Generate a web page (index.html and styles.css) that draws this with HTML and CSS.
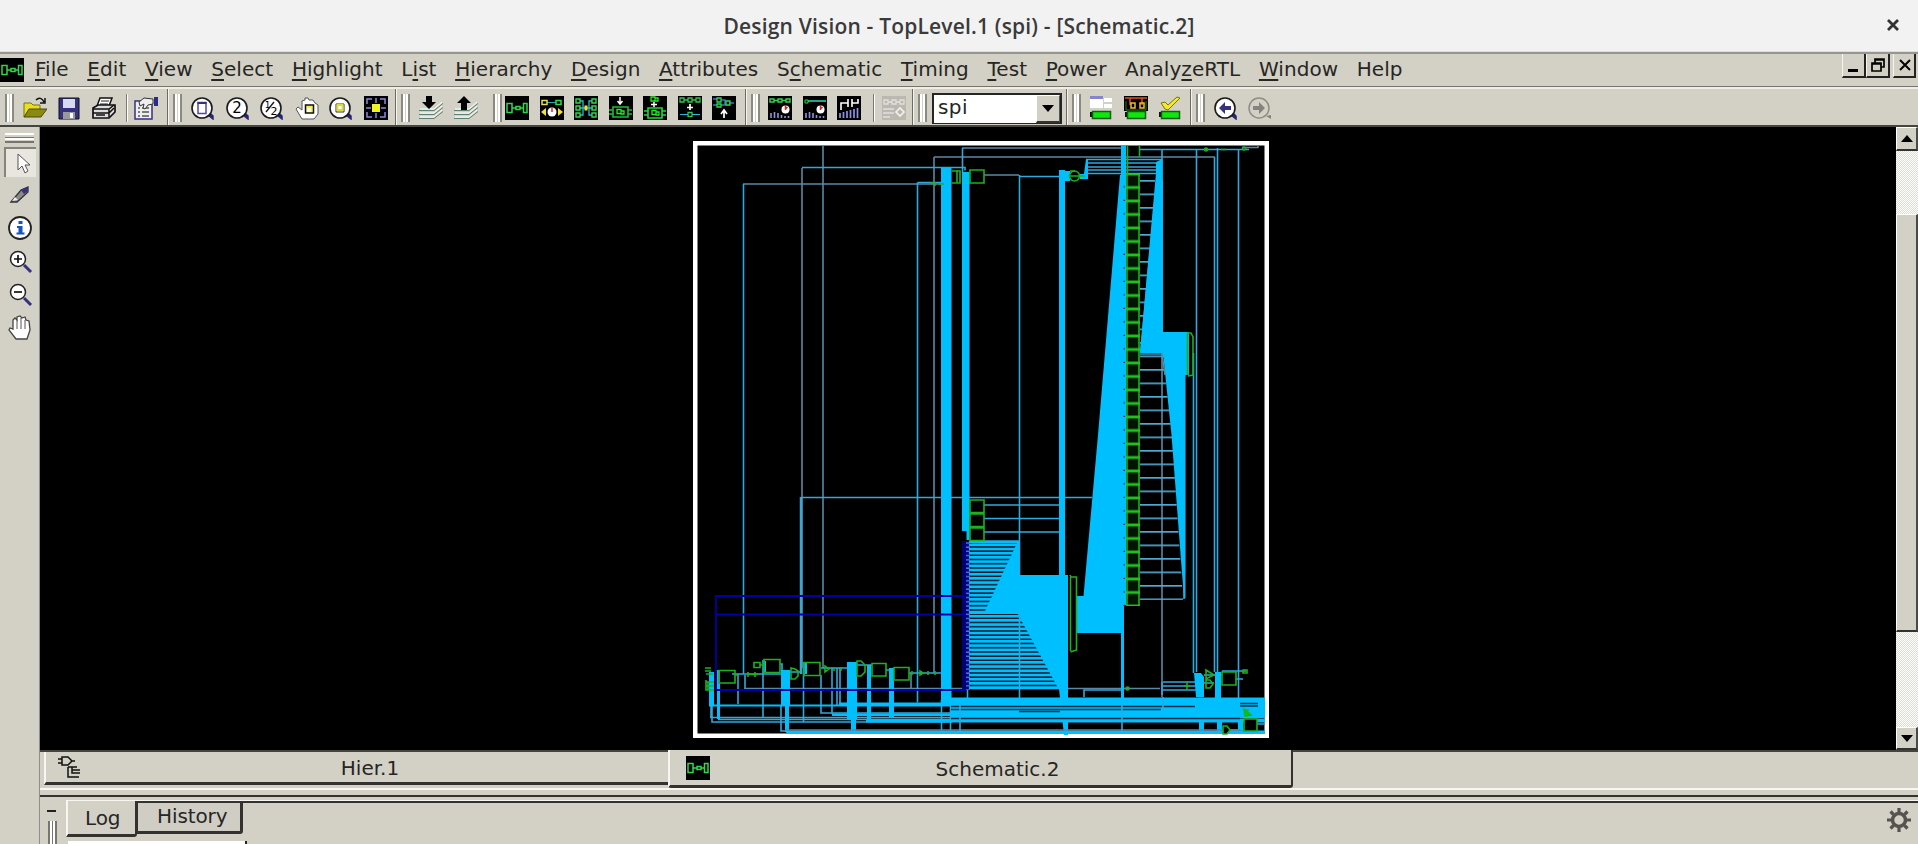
FILE: index.html
```html
<!DOCTYPE html>
<html lang="en">
<head>
<meta charset="utf-8">
<title>Design Vision - TopLevel.1 (spi) - [Schematic.2]</title>
<link rel="stylesheet" href="styles.css">
</head>
<body>
<svg width="0" height="0" class="defs">
  <defs>
    <symbol id="logo" viewBox="0 0 24 24"><path fill="#000" d="M0 0h24v24H0z"/><path fill="none" stroke="#2fd84a" stroke-width="1.5" d="M2 7.500h5v9H2zM18.500 7.500H22v9h-3.500zM11 10.500h4v3h-4zM7 12h4M15 12h3.500"/></symbol>
    <symbol id="lens" viewBox="0 0 24 24"><path d="M17 19l5 4v-3l-2-2z" fill="#2a2478" stroke="#2a2478" stroke-width="1.500"/><circle cx="11" cy="12" r="10" fill="#fff" stroke="#1b1b1b" stroke-width="1.600"/></symbol>
    <symbol id="sheets" viewBox="0 0 24 24"><path fill="none" stroke="#fff" d="M1 13h14l8-7M1 17h14l8-7M1 21h14l8-7"/><path fill="none" stroke="#5d8173" d="M0 14.500h15l9-7M0 18.500h15l9-7M0 22.500h15l9-7"/></symbol>
    <symbol id="bars" viewBox="0 0 24 24"><path fill="none" stroke="#8f8fe8" stroke-width="1.600" d="M3 22v-5M6.500 22v-6M10 22v-5M13.500 22v-3M17 22v-2M20.500 22v-2"/><circle cx="17.500" cy="13.500" r="4" fill="#fff"/><path d="M17.500 14V9M17.500 13l2-2" stroke="#d22" stroke-width="1.500"/></symbol>
    <symbol id="battery" viewBox="0 0 24 24"><path fill="#111" d="M1 16h3v5H1z"/><path fill="#0ce80c" stroke="#135c10" stroke-width="1.500" d="M3.500 15.500h18v7h-18z"/></symbol>
  </defs>
</svg>

<div class="window">
  <header class="titlebar">
    <span class="title">Design Vision - TopLevel.1 (spi) - [Schematic.2]</span>
    <svg class="close" width="14" height="14" viewBox="0 0 14 14"><path d="M2 2l10 10M12 2L2 12" stroke="#333" stroke-width="2.800"/></svg>
  </header>

  <nav class="menubar">
    <svg class="app" width="24" height="24"><use href="#logo"/></svg>
    <span class="m"><u>F</u>ile</span><span class="m"><u>E</u>dit</span><span class="m"><u>V</u>iew</span><span class="m"><u>S</u>elect</span><span class="m"><u>H</u>ighlight</span><span class="m">L<u>i</u>st</span><span class="m"><u>H</u>ierarchy</span><span class="m"><u>D</u>esign</span><span class="m"><u>A</u>ttributes</span><span class="m">S<u>c</u>hematic</span><span class="m"><u>T</u>iming</span><span class="m"><u>T</u>est</span><span class="m"><u>P</u>ower</span><span class="m">Analy<u>z</u>eRTL</span><span class="m"><u>W</u>indow</span><span class="m">Help</span>
    <div class="winbtns">
      <span class="wb"><svg width="20" height="20"><path d="M4 15.500h10" stroke="#000" stroke-width="3"/></svg></span>
      <span class="wb"><svg width="20" height="20"><path d="M7 8V4h9v8h-3M7 4.800h9M4 8h9v8H4zM4 9h9" fill="none" stroke="#000" stroke-width="1.700"/></svg></span>
      <span class="wb last"><svg width="20" height="20"><path d="M5 5l10 10M15 5L5 15" stroke="#000" stroke-width="2"/></svg></span>
    </div>
  </nav>

  <div class="toolbars">
    <div class="tb tb-file">
      <i class="grip"></i>
      <svg class="ic" viewBox="0 0 24 24"><path d="M1 21V7h7l2 2h7v4" fill="#e8df22" stroke="#77740a"/><path d="M1 21l5-8h18l-6 8z" fill="#8a8a10" stroke="#4a4a08"/><path d="M13 4c3-3 6-2 8 2M22 2v5h-5" fill="none" stroke="#111" stroke-width="1.500"/></svg>
      <svg class="ic" viewBox="0 0 24 24"><path d="M2 2h20v21H2z" fill="#37327f" stroke="#111"/><path d="M6 3h12v9H6z" fill="#d8daf0"/><path d="M6 16h12v7H6z" fill="#999"/><path d="M13 17h3v5h-3z" fill="#fff"/></svg>
      <svg class="ic" viewBox="0 0 24 24"><path d="M8 2h12l-3 8H5z" fill="#fff" stroke="#111" stroke-width="1.500"/><path d="M9 5h8M8 8h8" stroke="#222"/><path d="M1 12l5-3h17v7l-6 6H1z" fill="#ddd" stroke="#111" stroke-width="1.700"/><path d="M1 13h16l5-4M1 17h16l5-5M17 13v8M4 19h9" fill="none" stroke="#111" stroke-width="1.500"/></svg>
      <i class="sep"></i>
      <svg class="ic" viewBox="0 0 24 24"><path d="M1 5h17v18H1z" fill="#eee" stroke="#37327f" stroke-width="1.500"/><path d="M4 12h2M8 12h7M4 16h2M8 16h7M4 20h2M8 20h7" stroke="#555" stroke-width="1.500"/><path d="M5 6l5-4 9 1v5l-5 1-3 4-2-1 1-4-4 2z" fill="#eee" stroke="#333"/><path d="M20 1h4v9h-4z" fill="#2f2988"/></svg>
    </div>
    <div class="tb tb-view">
      <i class="grip"></i>
      <svg class="ic" viewBox="0 0 24 24"><use href="#lens"/><path d="M7 6.500h8v11H7z" fill="#fff" stroke="#4f48a8" stroke-width="1.500"/><path d="M6.500 6h9v2h-9z" fill="#37327f"/></svg>
      <svg class="ic" viewBox="0 0 24 24"><use href="#lens"/><text x="11" y="17" class="lens-t">2</text></svg>
      <svg class="ic" viewBox="0 0 24 24"><use href="#lens"/><text x="7.500" y="12" class="lens-s">1</text><path d="M6 16L14 6" stroke="#111" stroke-width="1.300"/><text x="14" y="18.500" class="lens-s big">2</text></svg>
      <svg class="ic" viewBox="0 0 24 24"><path d="M7 23L1 13l2-2 4 3V5l3-1V2h3l1 2h4l2 3 3 2v9l-4 5z" fill="#fff" stroke="#555"/><path d="M10.500 9h8v8h-8z" fill="#f4f445" stroke="#111" stroke-width="1.500"/><path d="M12 12h4v4h-4z" fill="#fff"/></svg>
      <svg class="ic" viewBox="0 0 24 24"><use href="#lens"/><path d="M7 8h8v8H7z" fill="#fff" stroke="#333"/><path d="M8.500 9h5v5h-5z" fill="none" stroke="#dede2a" stroke-width="1.800"/></svg>
      <svg class="ic" viewBox="0 0 24 24"><path d="M0 0h24v24H0z"/><path d="M3 8V3h5M16 3h5v5M21 16v5h-5M8 21H3v-5M12 2v5M12 17v5M2 12h5M17 12h5" fill="none" stroke="#8c86e0" stroke-width="1.500"/><path d="M8 8h8v8H8z" fill="#f4f422"/></svg>
    </div>
    <div class="tb tb-hier">
      <i class="grip"></i>
      <svg class="ic" viewBox="0 0 24 24"><use href="#sheets"/><path d="M7 0h6v6h4l-7 7-7-7h4z"/></svg>
      <svg class="ic" viewBox="0 0 24 24"><use href="#sheets"/><path d="M7 14h6V7h4l-7-7-7 7h4z"/></svg>
    </div>
    <div class="tb tb-schem">
      <i class="grip"></i>
      <svg class="ic" viewBox="0 0 24 24"><use href="#logo"/></svg>
      <svg class="ic" viewBox="0 0 24 24"><path d="M0 0h24v24H0z"/><path d="M7 6.500h9" stroke="#2ab"/><path d="M2 4.500h5v4H2z" fill="none" stroke="#e6dc5a" stroke-width="1.500"/><path d="M16 4.500h5v4h-5z" fill="none" stroke="#2fd84a" stroke-width="1.500"/><circle cx="12" cy="16" r="4.500" fill="#fff"/><path d="M12 16v-4" stroke="#d22" stroke-width="1.500"/><path d="M6 12v8l-5-4zM18 12v8l5-4z" fill="#f3e32a"/></svg>
      <svg class="ic" viewBox="0 0 24 24"><path d="M0 0h24v24H0z"/><path d="M6 5h3v14H6M18 5h-3v14h3M5 12h14" fill="none" stroke="#2bb8d8" stroke-width="1.300"/><path d="M2 3h4v4H2zM2 10h4v4H2zM2 17h4v4H2zM18 3h4v4h-4zM18 10h4v4h-4zM18 17h4v4h-4z" fill="none" stroke="#2fd84a" stroke-width="1.400"/><path d="M10.500 9.500h3v5h-3z" fill="#f3e32a"/></svg>
      <svg class="ic" viewBox="0 0 24 24"><path d="M0 0h24v24H0z"/><path d="M11 1v6M8.500 5l2.500 3 2.500-3" stroke="#fff" stroke-width="1.500" fill="none"/><path d="M4 11h15v10H4zM0 14h4M0 18h4M19 14h4M19 18h4" fill="none" stroke="#25b83a" stroke-width="1.600"/><path d="M8 13.500h4v4H8zM12 15h3v3h-3z" fill="none" stroke="#20ee20" stroke-width="1.300"/></svg>
      <svg class="ic" viewBox="0 0 24 24"><path d="M0 0h24v24H0z"/><path d="M8 1h4v4H8zM12 2h3v3h-3z" fill="none" stroke="#20ee20" stroke-width="1.300"/><path d="M11 6v5M8 8.500h6" stroke="#fff" stroke-width="1.500"/><path d="M5 12h14v10H5zM1 15h4M1 19h4M19 15h4M19 19h4" fill="none" stroke="#25d83a" stroke-width="1.600"/><path d="M9 14.500h4v4H9zM13 16h3v3h-3z" fill="none" stroke="#20ee20" stroke-width="1.300"/></svg>
      <svg class="ic" viewBox="0 0 24 24"><path d="M0 0h24v24H0z"/><path d="M2 2h4v4H2zM10 2h4v4h-4zM18 2h4v4h-4zM6 4h4M14 4h4M10 16.500h4v4h-4z" fill="none" stroke="#2fc84a" stroke-width="1.300"/><path d="M2 18.500h8M14 18.500h8" stroke="#2bb8d8"/><path d="M12 8v6M9 11.500h6" stroke="#fff" stroke-width="1.700"/></svg>
      <svg class="ic" viewBox="0 0 24 24"><path d="M0 0h24v24H0z"/><path d="M1 3h4M1 9h4M9 4h4v5H9M17 7h5" fill="none" stroke="#3d6fe0" stroke-width="1.500"/><path d="M5 2h4v4H5zM5 8h4v3H5zM14 5h4v4h-4z" fill="none" stroke="#2fd84a" stroke-width="1.300"/><path d="M12 22v-7M9 18l3-4 3 4" fill="none" stroke="#fff" stroke-width="1.700"/></svg>
    </div>
    <div class="tb tb-time">
      <i class="grip"></i>
      <svg class="ic" viewBox="0 0 24 24"><path d="M0 0h24v24H0z"/><path d="M2 3h4v3H2zM10 3h4v3h-4zM18 3h4v3h-4zM6 4.500h4M14 4.500h4" fill="none" stroke="#2fd84a" stroke-width="1.400"/><use href="#bars"/></svg>
      <svg class="ic" viewBox="0 0 24 24"><path d="M0 0h24v24H0z"/><path d="M2 4h3v3H2z" fill="none" stroke="#2fd84a"/><path d="M5 5h18" stroke="#2fd8b4" stroke-width="1.500"/><use href="#bars"/></svg>
      <svg class="ic" viewBox="0 0 24 24"><path d="M0 0h24v24H0z"/><path d="M4 14V7h7M11 3v8M15 3v8M15 7h6V3" fill="none" stroke="#fff" stroke-width="1.600"/><path d="M3 22v-5M6.500 22v-6M10 22v-7M13.500 22v-8M17 22v-9M20.500 22V12" stroke="#8f8fe8" stroke-width="1.700"/></svg>
      <i class="sep"></i>
      <svg class="ic" viewBox="0 0 24 24"><path d="M0 0h24v24H0z" fill="#bab8b1"/><path d="M2 4h4v4H2zM10 4h4v4h-4zM18 4h4v4h-4zM6 6h4M14 6h4M1 13h11M1 17h11M1 21h7" fill="none" stroke="#e2e0da" stroke-width="1.300"/><path d="M14 16l4-4 4 4-4 4z" fill="none" stroke="#f2f0ea" stroke-width="1.700"/></svg>
    </div>
    <div class="tb tb-combo">
      <i class="grip"></i>
      <div class="combo"><span>spi</span><b><svg width="12" height="7"><path d="M0 0h12L6 7z"/></svg></b></div>
    </div>
    <div class="tb tb-power">
      <i class="grip"></i>
      <svg class="ic" viewBox="0 0 24 24"><path d="M1 0h13v12H1zM15 2h8v4h-8zM15 8h8v4h-8z" fill="#fff"/><path d="M1 0h13v3H1z" fill="#8784cf"/><use href="#battery"/></svg>
      <svg class="ic" viewBox="0 0 24 24"><path d="M0 0h24v15H0z"/><path d="M1 2h22M6 2v7M18 2v7" stroke="#e0531e" stroke-width="1.500"/><path d="M7 7h4v5H7zM16 7h4v5h-4z" fill="none" stroke="#f0c020" stroke-width="1.500"/><path d="M2 5v9h20V5" fill="none" stroke="#1f8020"/><use href="#battery"/></svg>
      <svg class="ic" viewBox="0 0 24 24"><use href="#battery"/><path d="M3 7l4-1 3 3L19 1l3 1L10 14 7 13z" fill="#f4ec20" stroke="#77720a"/></svg>
    </div>
    <div class="tb tb-nav">
      <i class="grip"></i>
      <svg class="ic" viewBox="0 0 24 24"><use href="#lens"/><path d="M5 12l6-6v4h6v4h-6v4z" fill="#37327f"/></svg>
      <svg class="ic" viewBox="0 0 24 24"><circle cx="11" cy="12" r="10" fill="none" stroke="#8f8d86" stroke-width="1.500"/><path d="M17 12l-6-6v4H5v4h6v4zM18 20l5 3v-4z" fill="#85837c"/></svg>
    </div>
  </div>

  <main class="work">
    <aside class="side">
      <i class="hgrip"></i>
      <span class="tool on"><svg width="32" height="30"><path d="M14 7v16l4-4 3 7 3-2-3-6h5z" fill="#fff" stroke="#555"/></svg></span>
      <span class="tool"><svg width="32" height="30"><path d="M7 22L17 10l7-3v5L13 22z" fill="#8a8a8a" stroke="#333" stroke-width="1.300"/><path d="M17 10l7-3v4l-4 3z" fill="#37327f"/><path d="M8 21l3-4 3 3z" fill="#eee"/></svg></span>
      <span class="tool"><svg width="32" height="30"><circle cx="16" cy="15" r="11" fill="#fff" stroke="#222" stroke-width="1.800"/><path d="M14.500 8h4v3h-4zM13 13h5.500v6.500h2v2h-8v-2h2v-4.500h-1.500z" fill="#1555c0"/></svg></span>
      <span class="tool"><svg width="32" height="30"><path d="M20 18l7 7" stroke="#37327f" stroke-width="3"/><circle cx="14" cy="12" r="7.500" fill="#fff" stroke="#222" stroke-width="1.500"/><path d="M10 12h8M14 8v8" stroke="#111" stroke-width="1.700"/></svg></span>
      <span class="tool"><svg width="32" height="30"><path d="M20 18l7 7" stroke="#37327f" stroke-width="3"/><circle cx="14" cy="12" r="7.500" fill="#fff" stroke="#222" stroke-width="1.500"/><path d="M10 12h8" stroke="#111" stroke-width="1.700"/></svg></span>
      <span class="tool"><svg width="32" height="30"><path d="M12 26l-7-9 1-2 3 1V7l2-2 2 2V4l3-1 2 2 3-1 1 3 3 1 1 9-3 9z" fill="#fff" stroke="#444" stroke-width="1.300"/><path d="M13 7v9M17 5v11M21 7v9" stroke="#555"/></svg></span>
    </aside>

    <section class="pane">
      <div class="view">
        <svg class="schematic" viewBox="40 127 1856 623">
          <defs>
            <pattern id="stub" x="0" y="180" width="60" height="13.500" patternUnits="userSpaceOnUse"><path d="M0 .8h60" stroke="#4fa9d0" stroke-width="1.600"/></pattern>
            <pattern id="cell" x="1126" y="174" width="14" height="13.500" patternUnits="userSpaceOnUse"><path d="M0 0h14v13.500H0z" fill="#021402"/><path d="M1 0v13.500M13 0v13.500" stroke="#17b317" stroke-width="1.600"/><path d="M0 .7h14M0 12.800h14" stroke="#22c022" stroke-width="1.500"/></pattern>
            <pattern id="pin" x="1123" y="174" width="3" height="13.500" patternUnits="userSpaceOnUse"><path d="M.5 13h1.500" stroke="#024" stroke-width="1.400"/></pattern>
            <pattern id="stripe" x="0" y="546" width="60" height="4.200" patternUnits="userSpaceOnUse"><path d="M0 1h60" stroke="#021726" stroke-width="1.500"/></pattern>
            <pattern id="tick" x="966" y="542" width="4" height="4.200" patternUnits="userSpaceOnUse"><path d="M0 1h4" stroke="#4b78d8" stroke-width="1.500"/></pattern>
          </defs>
          <rect x="695.250" y="143.250" width="571.500" height="592.500" class="frame"/>

          <g class="gray">
            <path d="M743 184h200M802 168v500M823 145v523M934 157v516M934 157h281M962 148h160M984 175h35M1242 147.500h16v-2M1162 352v345M745 688.500h415M911 673v16"/>
          </g>
          <g class="net">
            <path d="M743.500 184v490M802 167.500h163v3M917.500 182.500v520M917.500 182.500h24M962.500 148v25M1019.500 175v536M1019.500 176.500h40M1139 149.500h110M1162 149v184M1193.500 353v320M1196.500 149v523M1214.500 157v515M1217.500 148v527M1238.500 149v552"/>
            <path d="M1086 159.500h76M1086 163h76M1086 167h75M1086 170h73M1086 173.500h70"/>
            <path d="M801 497.500h291M984 505h76M984 518.500h76M984 532h76M970 541h49M963 518v12h3"/>
            <path d="M738 674v30M745 675v14M732 674h50M763 660v58M803.500 662v60M821 675v38h130M832 668v46M837 668v37M840 668v36M711 684v33M712 705v17h240M710 717.500h554M718 719.500h546M781 705v26h6M821 668h26M790 672h12M780 664h2v10M856 665h16M886 670h8M909 673h32"/>
            <path d="M941.500 700v31M950.500 700v31M967.500 690v29M1084 697v-7h37M1163 682h33M1163 686h33M1163 690h33M1162 695v-13M1222 671h24M1236 679h7M1256 724h8M1230 730h14M1204 675h18M1204 683h10"/>
          </g>
          <path d="M801 497v177" class="net2"/>

          <g class="fill">
            <path d="M941 168h10.500v535H941zM962 172h7.500v368h-3v-9h-4.500zM1059 170h6v405h-6zM1065 171h5v10h-5zM1086 159h2v20h-8v-5h4zM1121 145h5v32h-5z"/>
            <path d="M1120 175h6v430h-2v96h-3v-68h-44v-37h6.500L1098 435z"/>
            <path d="M1162.500 159v173H1189v43h-3.500v223H1184l-2-25-10.500-138-8-77-2-5H1140l16-180v-11z"/>
            <path d="M969 541h50v34h49v160h-4l-5-46h-90z"/>
            <path d="M709 672h5v33h-5zM717 670h3v49h-3zM763 661h3v12h-3zM781 670h9v35h-9zM785 705h4v27h-4zM804 663h3v11h-3zM847 662h10v57h-10zM851 719h5v13h-5zM867 665h4v54h-4zM889 668h5v50h-5zM1194 673h7l3 4v20h-8zM1215 672h6v26h-6zM941 697.500h324v20H951v-12h-10zM709 704.500h241v2H709zM832 713.500h120v2.500H832zM866 719.500h399v3H866zM785 730.500h480v3.500H787zM1064 722h4v12h-4zM1199 722h5v12h-5zM1217 722h5v12h-5zM1238 722h5v8h-5zM839 702.500h102v2H839z"/>
          </g>
          <path d="M951 706.500h244M951 709.500h210M1019 711.500h41M951 718.500h289M1240 703.500h18M1240 706h18" class="gap"/>
          <path d="M785 730h455" class="gray"/>
          <path d="M960 704v27M1122 704v27M1163 697v12" class="net"/>

          <rect x="1139" y="178" width="16" height="174" fill="url(#stub)"/>
          <path d="M1139 353h22l2 5 9 77 11 165h-44z" fill="url(#stub)"/>
          <path d="M1184 574v25" class="net"/>
          <path d="M1139 353v1h23l3 21" class="gray"/>
          <path d="M1156 180L1140 352h23V180z" class="fill"/>
          <path d="M969 543h48l-32 68h-16zM969 614h49l2 4 38 70h-89z" fill="url(#stripe)"/>
          <path d="M1019.500 614v75" class="net"/>
          <rect x="1126" y="174" width="14" height="432" fill="url(#cell)"/>
          <rect x="1123" y="174" width="3" height="432" fill="url(#pin)"/>

          <path d="M962 541h7v149h-7z" fill="#00007c"/>
          <rect x="966" y="542" width="4" height="148" fill="url(#tick)"/>
          <path d="M716 690v-94h247M716 614.500h250M716 690h250" class="navy"/>

          <g class="dev">
            <path d="M970 170h14v13h-14zM952 171h8v12h-8M939 184h5M957 170v13M1139.500 145v12M1127.500 145v30M1070 171h5M1070 176h15"/>
            <circle cx="1074.500" cy="176" r="5"/><circle cx="1206" cy="149.500" r="1.500"/><circle cx="1244" cy="148.500" r="1.500"/><circle cx="1127.500" cy="688.500" r="1.500"/>
            <path d="M1221 149.500h5M930 183h5v3M1187 333h4l2 4v38l-5 1M1187.500 333v42M1070 575l1 2h5.500v73l-6 2M1070.500 577v74"/>
            <path d="M970 500h14v12.500h-14zM970 514h14v12.500h-14zM970 528h14v12.500h-14z"/>
            <path d="M719 670.500h16v12.500h-16zM754 662.500h6v5h-6zM760 665h4M764 659.500h16v13h-16zM791 668v11h4l3-3v-5l-3-2zM804 662.500h16v13h-16zM857 661h4l4 4v7l-4 4h-4zM872 663.500h14v12.500h-14zM894 667.500h15v12.500h-15z"/>
            <path d="M705 668h6M705 671h6M706 674h7M706 680v10h8M708 682v8M706 682h8M706 686h8M735 675h3M748 672v5M755 672v5M748 674.500h10M825 666v6l4-3zM834 667v4M841 667v4M912 671v4M920 671v4l3-2zM928 671v4M935 671v4"/>
            <path d="M1206 670v9l8-4zM1206 680v8h4l3-4-3-4zM1243 670h4v3h-4zM1187 681v9M1184 686h6"/>
            <path d="M1222 672h14v13h-14zM1244 719h13v12h-13zM1223 726v8h4l3-4-3-4z" fill="#000"/>
            <path d="M1244 709l7 6-6 1zM1245 710h4" fill="#0c0"/>
          </g>
        </svg>
        <div class="scroll">
          <span class="sb"><svg width="12" height="7"><path d="M0 7h12L6 0z"/></svg></span>
          <span class="thumb"></span>
          <span class="sb end"><svg width="12" height="7"><path d="M0 0h12L6 7z"/></svg></span>
        </div>
      </div>

      <div class="doctabs">
        <div class="dtab hier">
          <svg width="26" height="26" viewBox="0 0 26 26"><path d="M5 3h6l4 4-4 4H5zM1 5h4M1 9h4M15 7h3M11 13v10h11M11 13h9M15 13v6h8M15 16h8" fill="none" stroke="#111" stroke-width="1.500"/></svg>
          <span>Hier.1</span>
        </div>
        <div class="dtab sch">
          <svg width="24" height="24" viewBox="0 0 24 24"><use href="#logo"/></svg>
          <span>Schematic.2</span>
        </div>
      </div>

      <div class="console">
        <div class="dock"><i class="minus"></i><i class="vgrip"></i></div>
        <div class="log">
          <div class="ltabs"><span class="lt active">Log</span><span class="lt">History</span></div>
          <div class="out"></div>
        </div>
        <svg class="gear" width="26" height="26" viewBox="-13 -13 26 26"><circle r="6.500" fill="none" stroke="#55534f" stroke-width="3.500"/><path d="M0-12v4M0 12V8M-12 0h4M12 0H8M-8.500-8.500l3 3M8.500 8.500l-3-3M-8.500 8.500l3-3M8.500-8.500l-3 3" stroke="#55534f" stroke-width="3.200"/></svg>
      </div>
    </section>
  </main>
</div>
</body>
</html>
```

FILE: styles.css
```css
* { box-sizing: border-box; }
body {
  margin: 0;
  background: #d4d0c6;
  color: #262624;
  font: 20px/24px "DejaVu Sans", sans-serif;
  overflow: hidden;
}
svg { display: block; flex: none; }
.defs { position: absolute; }
.window { width: 1918px; height: 844px; display: flex; flex-direction: column; background: #d3d0c5; }

.titlebar {
  height: 52px; flex: none; display: flex; align-items: center; justify-content: center;
  position: relative; background: #f2f2f2; border-bottom: 1px solid #dcdcdc;
}
.title { font: 600 21px/26px "Open Sans", sans-serif; letter-spacing: .18px; color: #3a3a3a; }
.close { position: absolute; right: 18px; top: 18px; }

.menubar {
  height: 35px; flex: none; display: flex; align-items: center;
  border-top: 2px solid #96958f; border-bottom: 1px solid #76756d;
}
.app { margin-right: 11px; }
.m { margin-right: 18.600px; padding-bottom: 2px; letter-spacing: .06px; white-space: nowrap; }
.m u { text-decoration-thickness: 1.500px; text-underline-offset: 3px; text-decoration-skip-ink: none; }
.winbtns { margin-left: auto; display: flex; align-self: flex-start; padding-right: 2px; }
.wb {
  width: 24px; height: 24px; padding: 1px;
  border: solid; border-width: 0 2px 2px 1px; border-color: #fff #222 #222 #f6f4ee;
}
.wb.last { margin-left: 3px; width: 23px; }

.toolbars { height: 40px; flex: none; display: flex; border-top: 2px solid #efede5; border-bottom: 2px solid #45443f; }
.tb { height: 36px; display: flex; align-items: center; padding: 2px 0 0 5px; border-right: 1px solid #6c6a63; box-shadow: 1px 0 #f6f4ee; }
.tb:last-child { border: 0; box-shadow: none; }
.ic { width: 24px; height: 24px; margin-right: 10.500px; }
.grip {
  width: 9px; height: 28px; flex: none; margin-right: 7px;
  border: solid; border-width: 0 2px; border-color: #8b8980;
  background: linear-gradient(90deg, #fff 2px, #d3d0c5 2px 3px, #fff 3px);
}
.sep { width: 2px; height: 28px; background: #7b7972; border-right: 1px solid #fff; flex: none; }
.tb-file { width: 168px; }
.tb-file .grip { margin-right: 8.500px; }
.tb-file .sep { margin: 0 6px 0 0; }
.tb-view { width: 228px; }
.tb-view .grip { margin-right: 9px; }
.tb-hier { width: 92px; border: 0; box-shadow: none; }
.tb-hier .grip { margin-right: 9px; }
.tb-schem { width: 258px; }
.tb-schem .grip { margin-right: 3px; }
.tb-time { width: 167px; }
.tb-time .sep { margin: 0 7px 0 1px; }
.tb-time .grip, .tb-power .grip { margin-right: 8px; }
.tb-combo { width: 154px; }
.tb-combo .grip { margin-right: 5px; }
.tb-power { width: 124px; }
.tb-nav .grip { margin-right: 8.500px; }
.lens-t { font: 15px "DejaVu Sans", sans-serif; text-anchor: middle; }
.lens-s { font: 9px "DejaVu Sans", sans-serif; text-anchor: middle; }
.lens-s.big { font-size: 11px; }
.combo {
  width: 130px; height: 31px; flex: none; display: flex; background: #fff;
  border: solid #252525; border-width: 2px 2px 1px 2px;
}
.combo span { flex: 1; padding: 0 0 0 4px; font-size: 20px; letter-spacing: .4px; }
.combo b {
  width: 24px; display: flex; align-items: center; justify-content: center; background: #d3d0c5;
  border: solid; border-width: 1px 1px 2px 1px; border-color: #fff #555 #333 #fff;
}

.work { flex: 1; display: flex; min-height: 0; }
.side { width: 40px; flex: none; border-right: 1px solid #8f8e88; padding: 5px 0 0 4px; }
.hgrip {
  display: block; width: 29px; height: 10px; margin: 1px 0 4px 1px;
  border: solid #77756d; border-width: 0 0 2px; background: linear-gradient(#fff 2px, #d3d0c5 2px 4px, #77756d 4px 5px, #fff 5px 7px, #d3d0c5 7px);
}
.tool { display: block; width: 32px; height: 30px; margin-bottom: 3.200px; }
.tool.on { background: #e9e6df; box-shadow: inset 2px 2px #85837b; }

.pane { flex: 1; min-width: 0; display: flex; flex-direction: column; }
.view { height: 623px; flex: none; display: flex; background: #000; }
.schematic { width: 1856px; height: 623px; }
.frame { fill: none; stroke: #fff; stroke-width: 4.500px; }
.gray { fill: none; stroke: #5c87a3; stroke-width: 1.600px; }
.net { fill: none; stroke: #30a8dc; stroke-width: 1.600px; }
.net2 { fill: none; stroke: #38a6d2; stroke-width: 2.500px; }
.fill { fill: #00bfff; }
.gap { fill: none; stroke: #04324c; stroke-width: 1.500px; }
.navy { fill: none; stroke: #0000a4; stroke-width: 1.800px; }
.dev { fill: none; stroke: #1fb01f; stroke-width: 1.600px; }

.scroll {
  width: 22px; display: flex; flex-direction: column;
  background: repeating-conic-gradient(#fff 0 25%, #dedbd2 0 50%) 0 0 / 2px 2px;
}
.sb, .thumb { background: #d3d0c5; border: solid; border-width: 1px 2px 2px 1px; border-color: #fff #4b4a45 #33322f #fff; }
.sb { height: 24px; display: flex; align-items: center; justify-content: center; }
.thumb { height: 418px; margin-top: 63px; }
.sb.end { margin-top: auto; height: 23px; }

.doctabs { height: 47px; flex: none; display: flex; align-items: flex-start; border-top: 2px solid #45443f; border-bottom: 2px solid #33322f; box-shadow: inset 0 -5px #d3d0c5, inset 0 -7px #f8f6f0; padding-left: 4px; }
.dtab { display: flex; align-items: center; }
.dtab span { flex: 1; text-align: center; }
.hier { width: 624px; height: 33px; border-left: 2px solid #f8f6f0; border-bottom: 3px solid #33322f; padding: 0 11px 1px 11px; }
.hier span { padding-top: 2px; }
.sch { width: 625px; height: 38px; margin-top: -2px; background: #d3d0c5; border: solid; border-width: 0 2px 3px 2px; border-color: #33322f #33322f #33322f #f8f6f0; border-radius: 0 0 3px 3px; padding: 1px 0 0 16px; }
.sch span { padding: 2px 6px 0 0; }

.console { flex: 1; min-height: 0; display: flex; padding-top: 3px; position: relative; }
.dock { width: 26px; flex: none; padding: 10px 0 0 7px; }
.minus { display: block; width: 9px; height: 2px; background: #222; margin-bottom: 9px; }
.vgrip { display: block; width: 9px; height: 40px; margin-left: 1px; border: solid #77756d; border-width: 0 2px; background: linear-gradient(90deg, #fff 2px, #77756d 2px 3px, #fff 3px); }
.log { flex: 1; border-top: 1px solid #f8f6f0; box-shadow: inset 0 2px #33322f; }
.ltabs { display: flex; align-items: flex-start; }
.lt { width: 106px; height: 33px; padding: 1px 0 0 19px; letter-spacing: -.1px; background: #d0cdc5; border: solid #33322f; border-width: 2px 3px 3px 1px; border-radius: 0 0 3px 0; }
.lt.active { width: 71px; height: 36px; padding: 5px 0 0 17px; background: #d3d0c5; border-width: 0 2px 3px 2px; border-color: #33322f #33322f #33322f #f8f6f0; }
.out { width: 179px; height: 10px; margin: 4px 0 0 2px; background: #fff; border-right: 2px solid #222; }
.gear { position: absolute; right: 6px; top: 10px; }
```
